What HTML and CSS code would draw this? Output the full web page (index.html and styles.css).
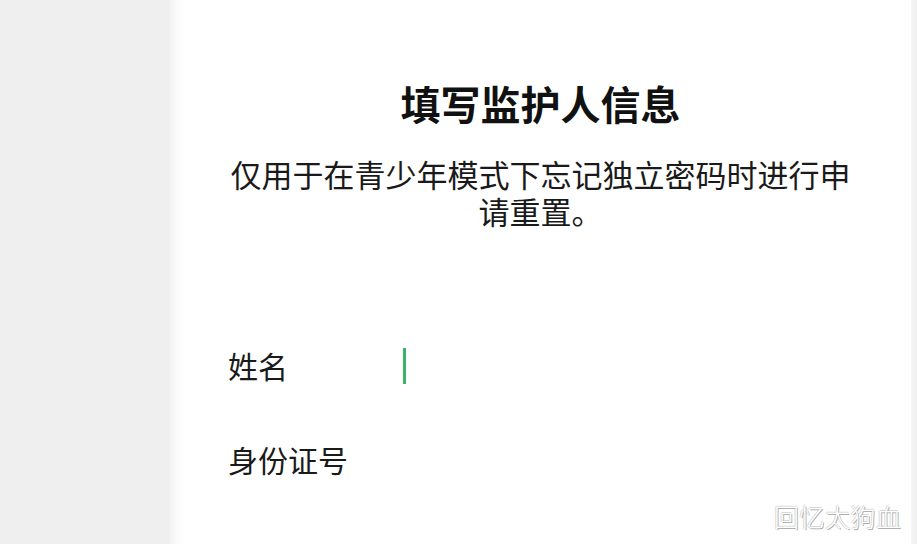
FILE: index.html
```html
<!DOCTYPE html>
<html lang="zh-CN">
<head>
<meta charset="utf-8">
<title>填写监护人信息</title>
<link rel="stylesheet" href="styles.css">
</head>
<body>
<div class="page">
  <aside class="sidebar"></aside>
  <main class="panel">
    <h1 class="title">填写监护人信息</h1>
    <p class="subtitle">仅用于在青少年模式下忘记独立密码时进行申请重置。</p>
    <div class="form">
      <div class="row">
        <span class="label">姓名</span>
        <span class="field"><span class="cursor"></span></span>
      </div>
      <div class="row">
        <span class="label">身份证号</span>
        <span class="field"></span>
      </div>
    </div>
  </main>
  <div class="edge"></div>
</div>
<div class="watermark">回忆太狗血</div>
</body>
</html>
```
FILE: styles.css
```css
html, body {
  margin: 0;
  padding: 0;
  width: 917px;
  height: 544px;
  overflow: hidden;
  background: #ffffff;
  font-family: "Noto Sans CJK SC", "Noto Sans", sans-serif;
  color: #151515;
}

.page {
  display: flex;
  width: 917px;
  height: 544px;
}

.sidebar {
  width: 170px;
  flex: none;
  background: #efefef;
}

.panel {
  flex: 1;
  background: linear-gradient(to right, #f3f3f3 0px, #fbfbfb 8px, #ffffff 16px);
  display: flex;
  flex-direction: column;
  align-items: center;
}

.edge {
  width: 6px;
  flex: none;
  background: linear-gradient(to right, #f6f6f6, #efefef);
}

.title {
  margin: 83px 0 0 0;
  font-size: 40px;
  line-height: 40px;
  font-weight: 700;
  color: #111111;
  letter-spacing: 0;
}

.subtitle {
  margin: 32px 0 0 0;
  width: 640px;
  text-align: center;
  font-size: 31px;
  line-height: 37px;
  font-weight: 400;
  color: #1a1a1a;
}

.form {
  align-self: stretch;
  margin-top: 121px;
  padding-left: 58px;
  display: flex;
  flex-direction: column;
  gap: 63px;
}

.row {
  display: flex;
  align-items: center;
  height: 31px;
}

.label {
  width: 175px;
  font-size: 30px;
  line-height: 31px;
  color: #1a1a1a;
}

.field {
  display: flex;
  align-items: center;
  height: 31px;
}

.cursor {
  display: block;
  width: 3px;
  height: 36px;
  background: #3bb36a;
}

.watermark {
  position: absolute;
  left: 774px;
  top: 501px;
  font-size: 25px;
  line-height: 30px;
  font-weight: 300;
  color: #ffffff;
  text-shadow: 1px 1px 0 #b0b0b0, -1px 0 0 #d8d8d8, 0 -1px 0 #d8d8d8;
  letter-spacing: 0.5px;
}
```
